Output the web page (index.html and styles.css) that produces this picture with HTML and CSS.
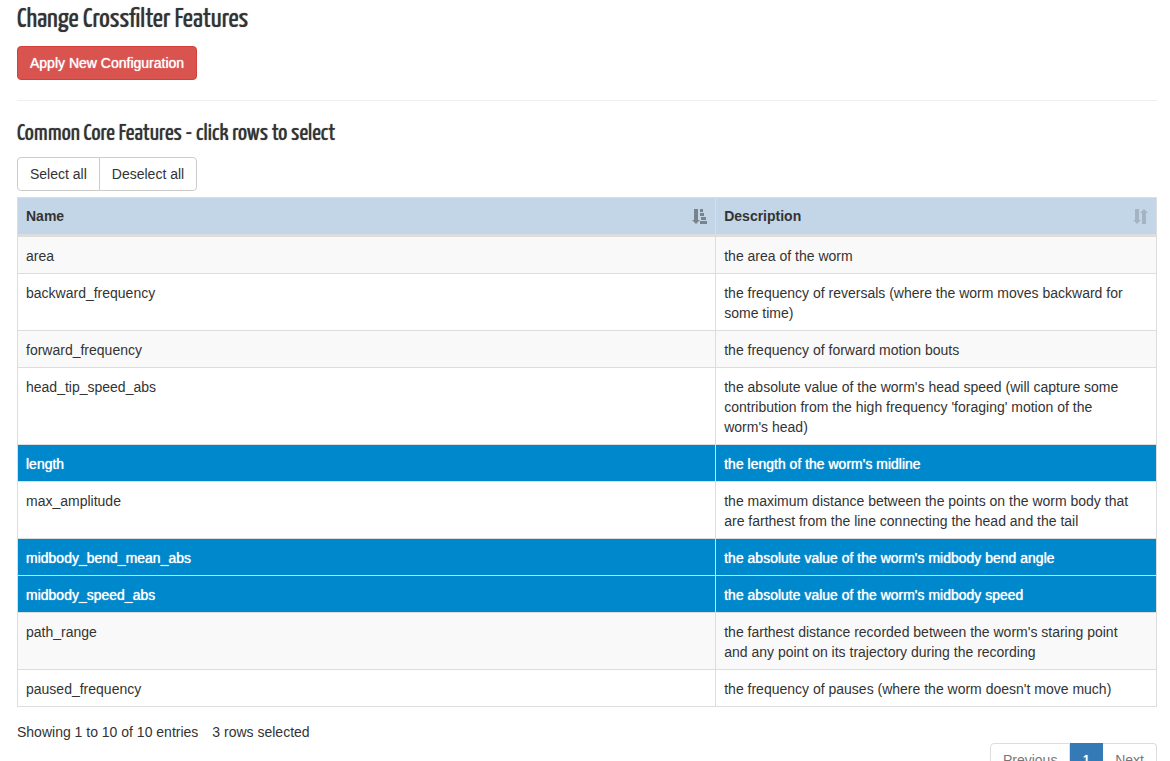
FILE: index.html
```html
<!DOCTYPE html>
<html lang="en">
<head>
<meta charset="utf-8">
<meta name="viewport" content="width=device-width, initial-scale=1">
<title>Change Crossfilter Features</title>
<link rel="stylesheet" href="styles.css">
</head>
<body>
<main class="page">
  <h1 class="title">Change Crossfilter Features</h1>
  <button type="button" class="btn btn-danger">Apply New Configuration</button>
  <hr class="divider">
  <h2 class="subtitle">Common Core Features - click rows to select</h2>
  <div class="btn-group">
    <button type="button" class="btn">Select all</button>
    <button type="button" class="btn">Deselect all</button>
  </div>
  <table class="features">
    <colgroup><col class="col-name"><col></colgroup>
    <thead>
      <tr>
        <th scope="col" aria-sort="ascending"><div class="head">Name
          <svg class="sort sort-active" viewBox="0 0 15 15" aria-hidden="true"><path d="M2 0h4v11h2L4 15 0 11h2zM8 0h3v3H8zM8 4h4v3H8zM9 8h5v3H9zM8 12h7v3H8z"/></svg></div></th>
        <th scope="col"><div class="head">Description
          <svg class="sort" viewBox="0 0 15 15" aria-hidden="true"><path d="M2 0h4v11h2L4 15 0 11h2zM9 15V4H7l4-4 4 4h-2v11z"/></svg></div></th>
      </tr>
    </thead>
    <tbody>
      <tr><td>area</td><td>the area of the worm</td></tr>
      <tr><td>backward_frequency</td><td>the frequency of reversals (where the worm moves backward for some time)</td></tr>
      <tr><td>forward_frequency</td><td>the frequency of forward motion bouts</td></tr>
      <tr><td>head_tip_speed_abs</td><td>the absolute value of the worm's head speed (will capture some contribution from the high frequency 'foraging' motion of the worm's head)</td></tr>
      <tr class="selected"><td>length</td><td>the length of the worm's midline</td></tr>
      <tr><td>max_amplitude</td><td>the maximum distance between the points on the worm body that are farthest from the line connecting the head and the tail</td></tr>
      <tr class="selected"><td>midbody_bend_mean_abs</td><td>the absolute value of the worm's midbody bend angle</td></tr>
      <tr class="selected"><td>midbody_speed_abs</td><td>the absolute value of the worm's midbody speed</td></tr>
      <tr><td>path_range</td><td>the farthest distance recorded between the worm's staring point and any point on its trajectory during the recording</td></tr>
      <tr><td>paused_frequency</td><td>the frequency of pauses (where the worm doesn't move much)</td></tr>
    </tbody>
  </table>
  <div class="info"><span>Showing 1 to 10 of 10 entries</span><span>3 rows selected</span></div>
  <nav class="pagination" aria-label="Table pages">
    <a href="#">Previous</a>
    <a href="#" class="current" aria-current="page">1</a>
    <a href="#">Next</a>
  </nav>
</main>
</body>
</html>
```
FILE: styles.css
```css
* { box-sizing: border-box; }
body {
  margin: 0;
  background: #fff;
  color: #333;
  font: 14px/20px "Helvetica Neue", Helvetica, "Liberation Sans", Arial, sans-serif;
}
.page { padding: 6px 13px 0 17px; }
.title, .subtitle {
  margin: 0;
  font-family: "Yanone Kaffeesatz", "Liberation Sans Narrow", "Liberation Sans", sans-serif;
  font-weight: 400;
  text-shadow: 0 0 1px #777;
}
.title { margin-bottom: 12px; font-size: 28px; line-height: 28px; }
.subtitle { margin-bottom: 10px; font-size: 24px; line-height: 26px; }
.btn {
  padding: 6px 12px;
  border: 1px solid #ccc;
  border-radius: 4px;
  background: #fff;
  color: #333;
  font: inherit;
  cursor: pointer;
}
.btn-danger {
  display: block;
  border-color: #d43f3a;
  background: #d9534f;
  color: #fff;
  text-shadow: 0 0 1px #fff;
}
.divider { margin: 20px 0; border: 0; border-top: 1px solid #eee; }
.btn-group { display: flex; margin-bottom: 6px; }
.btn-group .btn:first-child { border-radius: 4px 0 0 4px; }
.btn-group .btn:last-child { margin-left: -1px; border-radius: 0 4px 4px 0; }
.features {
  width: 100%;
  table-layout: fixed;
  border: 1px solid #ddd;
  border-top: 0;
  border-right: 0;
  border-spacing: 0;
}
.col-name { width: 61.300%; }
.features th, .features td {
  padding: 8px;
  border-top: 1px solid #ddd;
  border-right: 1px solid #ddd;
  text-align: left;
  vertical-align: top;
}
.features td { padding: 9px 20px 7px 8px; }
.features th { border-bottom: 2px solid #ddd; background: #c3d6e7; }
.head { display: flex; align-items: center; justify-content: space-between; }
.sort { width: 15px; height: 15px; fill: #333; opacity: 0.200; }
.sort-active { opacity: 0.500; }
.features tbody tr:nth-child(odd) { background: #f9f9f9; }
.features tbody tr.selected { background: #08c; color: #fff; text-shadow: 0 0 1px #fff; }
.features .selected + .selected td { border-top-color: #b3e5ff; }
.info { display: flex; gap: 14px; padding-top: 15px; }
.pagination { display: flex; justify-content: flex-end; margin-top: 1px; }
.pagination a {
  padding: 6px 12px;
  border: 1px solid #ddd;
  border-left: 0;
  background: #fff;
  color: #777;
  text-decoration: none;
}
.pagination a:first-child { border-left: 1px solid #ddd; border-radius: 4px 0 0 4px; }
.pagination a:last-child { border-radius: 0 4px 4px 0; }
.pagination .current { border-color: #337ab7; background: #337ab7; color: #fff; text-shadow: 0 0 1px #fff; }
```
